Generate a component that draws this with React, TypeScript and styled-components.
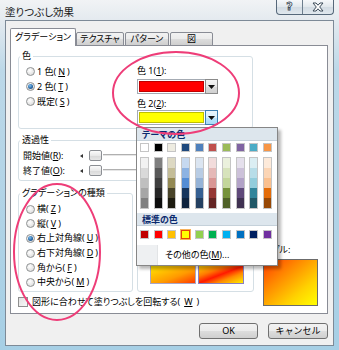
import React from "react";
import styled, { createGlobalStyle, css } from "styled-components";

const FONT = `"Noto Sans", "Noto Sans CJK JP", sans-serif`;

const Global = createGlobalStyle`
  html, body { margin: 0; padding: 0; background: #ffffff; }
  body { font-family: ${FONT}; }
  * { box-sizing: border-box; }
`;

const Window = styled.div`
  position: relative;
  width: 339px;
  height: 350px;
  overflow: hidden;
  display: flex;
  flex-direction: column;
  font-family: ${FONT};
  font-size: 9px;
  font-feature-settings: "palt";
  color: #000;
  background: linear-gradient(
    to bottom,
    #f1f3f5 0px,
    #e4eaef 20px,
    #bcd8e8 70px,
    #a6cfe5 100%
  );
`;

const TitleBar = styled.div`
  height: 20px;
  display: flex;
  justify-content: space-between;
  align-items: flex-start;
  padding: 0 5px 0 5px;
`;

const Title = styled.div`
  margin-top: 6px;
  font-size: 10.5px;
  line-height: 12px;
  color: #1a1a1a;
`;

const Caption = styled.div`
  display: flex;
  height: 15px;
  border: 1px solid #56687a;
  border-top: none;
  border-radius: 0 0 4px 4px;
  overflow: hidden;
  background: linear-gradient(to bottom, #f6f8fa, #e1e7ec 50%, #d2dbe3 51%, #e0e8ee);
`;

const CapBtn = styled.div<{ $w: number; $sep?: boolean }>`
  width: ${(p) => p.$w}px;
  display: flex;
  align-items: center;
  justify-content: center;
  ${(p) =>
    p.$sep &&
    css`
      border-right: 1px solid #6c7d8d;
    `}
`;

const QGlyph = styled.span`
  font-family: "DejaVu Sans", sans-serif;
  font-weight: bold;
  font-size: 11px;
  line-height: 12px;
  color: #ffffff;
  -webkit-text-stroke: 0.8px #3b4a58;
`;

const Client = styled.div`
  margin: 0 5px 4px 5px;
  flex: 1;
  border: 1px solid #7d8a97;
  background: #f0f0f0;
  padding: 7px 5px 0 4px;
  display: flex;
  flex-direction: column;
`;

const TabStrip = styled.div`
  display: flex;
  align-items: flex-end;
  height: 18px;
  margin-bottom: -1px;
  position: relative;
  z-index: 1;
`;

const Tab = styled.div<{ $w: number; $active?: boolean }>`
  width: ${(p) => p.$w}px;
  height: ${(p) => (p.$active ? 18 : 14)}px;
  border: 1px solid #898c95;
  border-bottom: ${(p) => (p.$active ? "none" : "1px solid #898c95")};
  border-radius: 2px 2px 0 0;
  margin-right: ${(p) => (p.$active ? 0 : 1)}px;
  display: flex;
  align-items: center;
  justify-content: center;
  line-height: 12px;
  background: ${(p) =>
    p.$active
      ? "#ffffff"
      : "linear-gradient(to bottom, #f2f2f2, #ebebeb 50%, #dddddd 51%, #cfcfcf)"};
  padding-bottom: ${(p) => (p.$active ? 2 : 0)}px;
`;

const Panel = styled.div`
  position: relative;
  width: 318px;
  height: 269px;
  border: 1px solid #898c95;
  background: #ffffff;
  padding: 4px 0 0 7px;
  display: grid;
  grid-template-columns: 235px 61px;
  column-gap: 4px;
  align-content: start;
`;

const Group = styled.fieldset<{ $h: number; $w?: number; $pl?: number; $mt?: number }>`
  grid-column: 1;
  margin: ${(p) => p.$mt ?? 0}px 0 0 0;
  padding: 0 0 0 ${(p) => p.$pl ?? 8}px;
  border: 1px solid #d5dfe5;
  border-radius: 3px;
  width: ${(p) => (p.$w ? `${p.$w}px` : "auto")};
  flex: none;
  height: ${(p) => p.$h}px;
  min-width: 0;
`;

const Legend = styled.legend<{ $ml?: number }>`
  padding: 0 2px;
  margin-left: ${(p) => p.$ml ?? -7}px;
  line-height: 12px;
  font-size: 9px;
  white-space: nowrap;
`;

const ColorBody = styled.div`
  display: flex;
`;

const RadioCol = styled.div<{ $w?: number; $mt?: number; $rh?: number }>`
  width: ${(p) => (p.$w ? `${p.$w}px` : "auto")};
  margin-top: ${(p) => p.$mt ?? 2}px;
  display: grid;
  grid-auto-rows: ${(p) => p.$rh ?? 15}px;
`;

const RadioRow = styled.label`
  display: flex;
  align-items: center;
  gap: 2px;
  margin-left: -1px;
  line-height: 12px;
  white-space: nowrap;
`;

const RadioDot = styled.span<{ $on?: boolean }>`
  width: 9px;
  height: 9px;
  border-radius: 50%;
  border: 1px solid #8f9293;
  background: radial-gradient(circle at 40% 35%, #ffffff 0%, #e6e6e6 60%, #cfcfcf 100%);
  display: flex;
  align-items: center;
  justify-content: center;
  &::after {
    content: "";
    display: ${(p) => (p.$on ? "block" : "none")};
    width: 5px;
    height: 5px;
    border-radius: 50%;
    background: radial-gradient(circle at 40% 35%, #7fc0f0 0%, #2a6aa8 55%, #173a66 100%);
  }
`;

const ColorCol = styled.div`
  display: flex;
  flex-direction: column;
  margin-top: 3px;
`;

const FieldLabel = styled.div<{ $mt?: number }>`
  line-height: 12px;
  margin-top: ${(p) => p.$mt ?? 0}px;
  white-space: nowrap;
`;

const Combo = styled.div<{ $mt?: number }>`
  width: 81px;
  height: 15px;
  margin-top: ${(p) => p.$mt ?? 0}px;
  border: 1px solid #a4abb3;
  background: #ffffff;
  padding: 1px;
  display: flex;
  gap: 1px;
`;

const ComboSwatch = styled.div<{ $c: string }>`
  flex: 1;
  background: ${(p) => p.$c};
  border: 1px solid rgba(0, 0, 0, 0.25);
`;

const DropBtn = styled.div<{ $hot?: boolean }>`
  width: 13px;
  margin: -2px -2px -2px 0;
  border: 1px solid ${(p) => (p.$hot ? "#3c7fb1" : "#8a8a8a")};
  background: ${(p) =>
    p.$hot
      ? "linear-gradient(to bottom, #eaf6fd, #d9f0fc 50%, #bee6fd 51%, #a7d9f5)"
      : "linear-gradient(to bottom, #f4f4f4, #e8e8e8 50%, #dcdcdc 51%, #d0d0d0)"};
  display: flex;
  align-items: center;
  justify-content: center;
`;

const SliderRow = styled.div`
  display: flex;
  align-items: center;
  height: 15px;
`;

const SliderLabel = styled.div`
  width: 55px;
  line-height: 12px;
  white-space: nowrap;
`;

const SliderArrow = styled.div`
  width: 0;
  height: 0;
  margin-left: 2px;
  border-top: 2.5px solid transparent;
  border-bottom: 2.5px solid transparent;
  border-right: 3px solid #333;
`;

const Thumb = styled.div`
  width: 13px;
  height: 11px;
  margin-left: 6px;
  border: 1px solid #8c8f94;
  border-radius: 2px;
  background: linear-gradient(to bottom, #fbfbfb, #e9e9e9 50%, #d8d8d8 51%, #e6e6e6);
`;

const Track = styled.div`
  width: 90px;
  height: 3px;
  margin-left: 1px;
  border-top: 1px solid #b0b0b0;
  border-bottom: 1px solid #ffffff;
  background: #e6e6e6;
`;

const TypeRow = styled.div`
  grid-column: 1;
  display: flex;
  gap: 4px;
  margin-top: 6px;
`;

const VariantGrid = styled.div`
  display: grid;
  grid-template-columns: 46px 46px;
  grid-template-rows: 19px 19px;
  gap: 2px;
  margin: 45px 0 0 4px;
`;

const VariantBox = styled.div<{ $g: string; $sel?: boolean }>`
  border: 1px solid ${(p) => (p.$sel ? "#8a7fc0" : "#a9a6c8")};
  background: ${(p) => p.$g};
`;

const SampleCol = styled.div`
  grid-column: 2;
  grid-row: 3 / span 2;
  display: flex;
  flex-direction: column;
  justify-content: flex-end;
  padding-bottom: 2px;
  margin-left: -2px;
`;

const SampleBox = styled.div`
  width: 55px;
  height: 47px;
  margin: 3px 0 0 8px;
  border: 1px solid #6b6b6b;
  background: linear-gradient(to bottom right, #ff3c00 0%, #ff8a00 35%, #ffd200 70%, #ffff00 100%);
`;

const CheckRow = styled.label`
  grid-column: 1;
  grid-row: 4;
  display: flex;
  align-items: center;
  gap: 4px;
  height: 12px;
  margin-top: 4px;
  line-height: 12px;
  white-space: nowrap;
`;

const CheckBox = styled.span`
  width: 10px;
  height: 10px;
  border: 1px solid #8f8f8f;
  background: linear-gradient(to bottom right, #e2e2e2, #f8f8f8);
`;

const Popup = styled.div`
  position: absolute;
  left: 125px;
  top: 81px;
  width: 142px;
  height: 139px;
  border: 1px solid #868686;
  background: #ffffff;
  box-shadow: 3px 3px 3px rgba(0, 0, 0, 0.28);
  display: flex;
  flex-direction: column;
  z-index: 2;
`;

const PopupHeader = styled.div<{ $mt?: number }>`
  height: 13px;
  margin-top: ${(p) => p.$mt ?? 0}px;
  background: #dde6ed;
  border-bottom: 1px solid #c5d1da;
  padding-left: 5px;
  font-weight: bold;
  line-height: 13px;
  color: #0b2a6e;
`;

const SwatchRow = styled.div<{ $mt: number }>`
  display: grid;
  grid-template-columns: repeat(10, 9px);
  column-gap: 4.67px;
  margin: ${(p) => p.$mt}px 0 0 3px;
`;

const Swatch = styled.div<{ $c: string; $sel?: boolean }>`
  width: 9px;
  height: 9px;
  background: ${(p) => p.$c};
  border: 1px solid ${(p) => (p.$sel ? "#e2440a" : "#c5c5c5")};
  ${(p) =>
    p.$sel &&
    css`
      outline: 1px solid #f7b25a;
    `}
`;

const ShadeCol = styled.div`
  width: 9px;
  height: 52px;
  border: 1px solid #c5c5c5;
  display: grid;
  grid-template-rows: repeat(5, 1fr);
`;

const Shade = styled.div<{ $c: string }>`
  background: ${(p) => p.$c};
`;

const MoreRow = styled.div`
  margin-top: auto;
  height: 20px;
  display: flex;
  align-items: center;
`;

const MoreIcon = styled.div`
  width: 21px;
  height: 100%;
  background: #eef0f2;
  border-right: 1px solid #e2e4e6;
`;

const MoreText = styled.div`
  margin-left: 7px;
  line-height: 12px;
`;

const ButtonRow = styled.div`
  display: flex;
  justify-content: flex-end;
  gap: 10px;
  margin-top: 9px;
`;

const DialogButton = styled.button<{ $w: number }>`
  width: ${(p) => p.$w}px;
  height: 16px;
  padding: 0;
  font-family: ${FONT};
  font-size: 9px;
  line-height: 12px;
  color: #000;
  border: 1px solid #707070;
  border-radius: 3px;
  background: linear-gradient(to bottom, #f2f2f2, #ebebeb 50%, #dddddd 51%, #cfcfcf);
`;

const Overlay = styled.svg`
  position: absolute;
  left: 0;
  top: 0;
  pointer-events: none;
  z-index: 5;
`;

const Key = ({ k }: { k: string }) => (
  <>
    (<u>{k}</u>)
  </>
);

const theme = ["#FFFFFF", "#000000", "#EEECE1", "#1F497D", "#4F81BD", "#C0504D", "#9BBB59", "#8064A2", "#4BACC6", "#F79646"];
const shades = [
  ["#F2F2F2", "#D9D9D9", "#BFBFBF", "#A6A6A6", "#808080"],
  ["#7F7F7F", "#595959", "#3F3F3F", "#262626", "#0D0D0D"],
  ["#DDD9C3", "#C4BD97", "#938953", "#494429", "#1D1B10"],
  ["#C6D9F0", "#8DB3E2", "#548DD4", "#17365D", "#0F243E"],
  ["#DBE5F1", "#B8CCE4", "#95B3D7", "#366092", "#244061"],
  ["#F2DCDB", "#E5B9B7", "#D99694", "#953734", "#632423"],
  ["#EBF1DD", "#D7E3BC", "#C3D69B", "#76923C", "#4F6128"],
  ["#E5E0EC", "#CCC1D9", "#B2A2C7", "#5F497A", "#3F3151"],
  ["#DBEEF3", "#B7DDE8", "#92CDDC", "#31859B", "#205867"],
  ["#FDEADA", "#FBD5B5", "#FAC08F", "#E36C09", "#974806"],
];
const standard = ["#C00000", "#FF0000", "#FFC000", "#FFFF00", "#92D050", "#00B050", "#00B0F0", "#0070C0", "#002060", "#7030A0"];

const variants = [
  "linear-gradient(to bottom right, #ff2a00, #ffff00)",
  "linear-gradient(to bottom right, #ffff00, #ff2a00)",
  "linear-gradient(to bottom right, #ffe600 0%, #ff9a00 60%, #ff3a00 100%)",
  "linear-gradient(to bottom right, #ffd000 0%, #ff7a00 30%, #ff1a00 50%, #ff8a00 70%, #ffee00 100%)",
];

const Triangle = () => (
  <svg width="7" height="4" viewBox="0 0 7 4">
    <path d="M0 0 H7 L3.5 4 Z" fill="#111" />
  </svg>
);

const CloseGlyph = () => (
  <svg width="12" height="10" viewBox="0 0 12 10">
    <path
      d="M1 1 H4 L6 3.2 L8 1 H11 L7.7 5 L11 9 H8 L6 6.8 L4 9 H1 L4.3 5 Z"
      fill="#ffffff"
      stroke="#3b4a58"
      strokeWidth="1"
      strokeLinejoin="round"
    />
  </svg>
);

export default function App() {
  return (
    <>
      <Global />
      <Window>
        <TitleBar>
          <Title>塗りつぶし効果</Title>
          <Caption>
            <CapBtn $w={26} $sep>
              <QGlyph>?</QGlyph>
            </CapBtn>
            <CapBtn $w={30}>
              <CloseGlyph />
            </CapBtn>
          </Caption>
        </TitleBar>
        <Client>
          <TabStrip>
            <Tab $w={66} $active>
              グラデーション
            </Tab>
            <Tab $w={48}>テクスチャ</Tab>
            <Tab $w={44}>パターン</Tab>
            <Tab $w={43}>図</Tab>
          </TabStrip>
          <Panel>
            <Group $h={79}>
              <Legend>色</Legend>
              <ColorBody>
                <RadioCol $w={110}>
                  <RadioRow>
                    <RadioDot />1 色<Key k="N" />
                  </RadioRow>
                  <RadioRow>
                    <RadioDot $on />2 色<Key k="T" />
                  </RadioRow>
                  <RadioRow>
                    <RadioDot />既定<Key k="S" />
                  </RadioRow>
                </RadioCol>
                <ColorCol>
                  <FieldLabel>
                    色 1<Key k="1" />:
                  </FieldLabel>
                  <Combo $mt={2}>
                    <ComboSwatch $c="#ff0000" />
                    <DropBtn>
                      <Triangle />
                    </DropBtn>
                  </Combo>
                  <FieldLabel $mt={4}>
                    色 2<Key k="2" />:
                  </FieldLabel>
                  <Combo>
                    <ComboSwatch $c="#ffff00" />
                    <DropBtn $hot>
                      <Triangle />
                    </DropBtn>
                  </Combo>
                </ColorCol>
              </ColorBody>
            </Group>

            <Group $h={47} $pl={4} $mt={5}>
              <Legend $ml={-3}>透過性</Legend>
              <RadioCol $mt={2}>
                <SliderRow>
                  <SliderLabel>
                    開始値<Key k="R" />:
                  </SliderLabel>
                  <SliderArrow />
                  <Thumb />
                  <Track />
                </SliderRow>
                <SliderRow>
                  <SliderLabel>
                    終了値<Key k="O" />:
                  </SliderLabel>
                  <SliderArrow />
                  <Thumb />
                  <Track />
                </SliderRow>
              </RadioCol>
            </Group>

            <TypeRow>
              <Group $h={105} $w={115}>
                <Legend>グラデーションの種類</Legend>
                <RadioCol $mt={3} $rh={14.6}>
                  <RadioRow>
                    <RadioDot />横<Key k="Z" />
                  </RadioRow>
                  <RadioRow>
                    <RadioDot />縦<Key k="V" />
                  </RadioRow>
                  <RadioRow>
                    <RadioDot $on />右上対角線<Key k="U" />
                  </RadioRow>
                  <RadioRow>
                    <RadioDot />右下対角線<Key k="D" />
                  </RadioRow>
                  <RadioRow>
                    <RadioDot />角から<Key k="F" />
                  </RadioRow>
                  <RadioRow>
                    <RadioDot />中央から<Key k="M" />
                  </RadioRow>
                </RadioCol>
              </Group>
              <Group $h={105} $w={117}>
                <Legend>バリエーション(A)</Legend>
                <VariantGrid>
                  {variants.map((g, i) => (
                    <VariantBox key={i} $g={g} $sel={i === 3} />
                  ))}
                </VariantGrid>
              </Group>
            </TypeRow>

            <SampleCol>
              <FieldLabel>サンプル:</FieldLabel>
              <SampleBox />
            </SampleCol>

            <CheckRow>
              <CheckBox />
              図形に合わせて塗りつぶしを回転する<Key k="W" />
            </CheckRow>

            <Popup>
              <PopupHeader>テーマの色</PopupHeader>
              <SwatchRow $mt={2}>
                {theme.map((c) => (
                  <Swatch key={c} $c={c} />
                ))}
              </SwatchRow>
              <SwatchRow $mt={5}>
                {shades.map((col, i) => (
                  <ShadeCol key={i}>
                    {col.map((c) => (
                      <Shade key={c} $c={c} />
                    ))}
                  </ShadeCol>
                ))}
              </SwatchRow>
              <PopupHeader $mt={4}>標準の色</PopupHeader>
              <SwatchRow $mt={4}>
                {standard.map((c) => (
                  <Swatch key={c} $c={c} $sel={c === "#FFFF00"} />
                ))}
              </SwatchRow>
              <MoreRow>
                <MoreIcon />
                <MoreText>
                  その他の色<Key k="M" />...
                </MoreText>
              </MoreRow>
            </Popup>
          </Panel>
          <ButtonRow>
            <DialogButton $w={59}>OK</DialogButton>
            <DialogButton $w={60}>キャンセル</DialogButton>
          </ButtonRow>
        </Client>
        <Overlay width="339" height="350" viewBox="0 0 339 350">
          <ellipse cx="176" cy="93" rx="63" ry="41" fill="none" stroke="#ee3d78" strokeWidth="2" />
          <ellipse cx="57" cy="252" rx="43" ry="68" fill="none" stroke="#ee3d78" strokeWidth="2" />
        </Overlay>
      </Window>
    </>
  );
}
